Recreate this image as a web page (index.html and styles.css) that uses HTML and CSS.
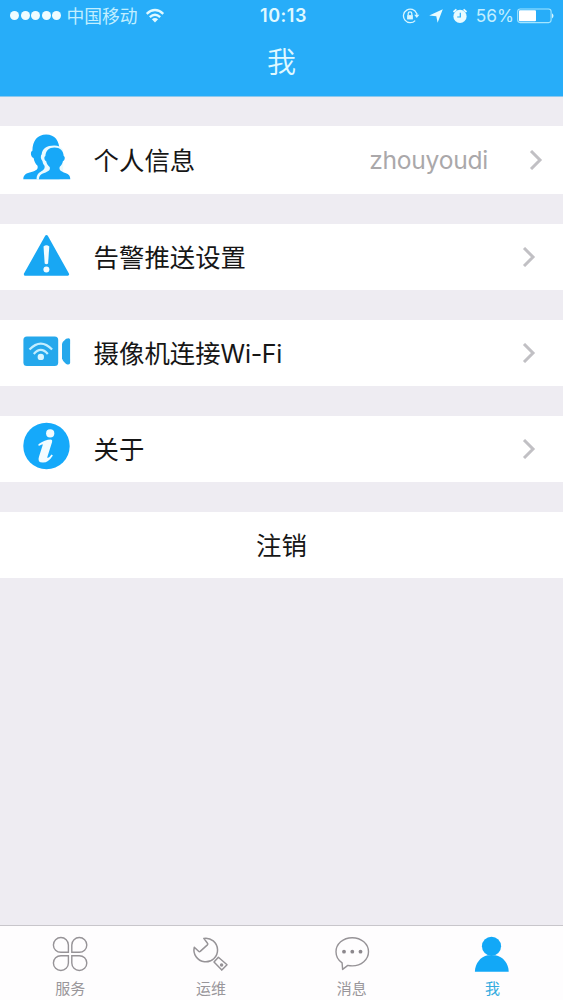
FILE: index.html
```html
<!DOCTYPE html>
<html lang="zh-CN">
<head>
<meta charset="utf-8">
<title>我</title>
<link rel="stylesheet" href="styles.css">
</head>
<body>
<div class="app">
  <header class="header">
    <div class="status">
      <div class="status-left">
        <div class="signal"><i></i><i></i><i></i><i></i><i></i></div>
        <span class="carrier">中国移动</span>
        <svg class="wifi" width="20" height="16" viewBox="0 0 20 16" fill="none" stroke="#e0f9ff" stroke-width="2.3"><path d="M1.7 5.8Q10-1.8 18.3 5.8M4.8 9.2Q10 4.2 15.2 9.2"/><path d="M6.9 11.2Q10 8.6 13.1 11.2L10 14.6Z" fill="#e0f9ff" stroke="none"/></svg>
      </div>
      <span class="time">10:13</span>
      <div class="status-right">
        <svg width="18" height="16" viewBox="0 0 18 16" fill="none" stroke="#d8f6ff" stroke-width="1.3"><path d="M14.5 5.2A6.8 6.8 0 1 0 13.2 12.6M14.8 5v3"/><path d="M12.2 6.8h5.2l-2.6 3.3z" fill="#d8f6ff" stroke="none"/><rect x="5.1" y="7.1" width="5.8" height="4.3" fill="#d8f6ff" stroke="none"/><path d="M6.2 7V5.6a1.8 1.8 0 0 1 3.6 0V7"/></svg>
        <svg width="14" height="14" viewBox="0 0 14 14"><path d="M13.8.2 8.6 13.8 7.3 7.3.2 6.4z" fill="#e8fbff"/></svg>
        <svg width="16" height="16" viewBox="0 0 16 16"><circle cx="8" cy="8.4" r="6.6" fill="#e8fbff"/><path d="M1.5 4 4.4 1.4M11.6 1.4l2.9 2.6" stroke="#e8fbff" stroke-width="1.8"/><path d="M8.3 4.8V9H5.2" fill="none" stroke="#27adf9" stroke-width="1.2"/></svg>
        <span class="percent">56%</span>
        <svg class="battery" width="38" height="16" viewBox="0 0 38 16"><rect x=".7" y="1" width="33.4" height="13.6" rx="2.5" fill="none" stroke="#a4e6ff" stroke-width="1.1"/><rect x="2" y="2.3" width="17" height="11" rx="1" fill="#fff"/><path d="M35 5.2q3 2.6 0 5.2z" fill="#d8f6ff"/></svg>
      </div>
    </div>
    <h1 class="title">我</h1>
  </header>

  <main class="list">
    <section class="row row-first">
      <svg class="icon" width="48" height="48" viewBox="0 0 48 48" fill="#17a8f8"><path d="M.3 46.2c.2-4.6 3-5.8 8.2-7.1 4.6-1.5 7-2.8 6-6.3-2.1-2.2-3.4-5-3.9-7.9-2.9-.6-3.6-6.5-1.2-7.2C9.5 7.6 14.5 1.4 23.2 1.4S36.4 7.6 36.6 17.7V46.2z"/><path d="M13.5 46.4c0-4 1.3-6 4.2-7.6 3-1.7 4.7-3.6 3.7-6.2-1.2-1.6-1.6-3-2-4.7-1.9-1.8-2-5.4-.7-6.7.5-5.4 5-8.7 12.5-8.7 4 0 7 1.3 9 4.4V46.4z" fill="#eafaff"/><path d="M15.9 46.2c.4-4.6 2.6-5.4 6.8-6.8 3.6-1.2 4.7-2.8 4-5.3-1.9-1.7-3-3.5-3.5-5.9-2-.6-2.5-4.4-.8-5.1.2-5.4 3.6-8.7 9.1-8.7s9 3.3 9.2 8.7c1.8.7 1.2 4.5-.8 5.1-.5 2.4-1.6 4.2-3.3 5.9-.7 2.5.7 4.1 4.2 5.3 4.2 1.4 6.4 2.2 6.5 6.8z"/></svg>
      <span class="label">个人信息</span>
      <span class="value">zhouyoudi</span>
      <svg class="chevron" width="14" height="20" viewBox="0 0 14 20"><path d="m2 1 9 9-9 9"/></svg>
    </section>
    <section class="row">
      <svg class="icon" width="48" height="48" viewBox="0 0 48 48"><path d="M23.5 5.6 44.6 43.2H2.3z" fill="#18a7f3" stroke="#18a7f3" stroke-width="3" stroke-linejoin="round"/><path d="M20.5 15.4q2.9-2.5 5.8 0l-1.2 17q-1.7 1.5-3.4 0z" fill="#f2fcff"/><circle cx="23.4" cy="38.4" r="3" fill="#f2fcff"/></svg>
      <span class="label">告警推送设置</span>
      <svg class="chevron" width="14" height="20" viewBox="0 0 14 20"><path d="m2 1 9 9-9 9"/></svg>
    </section>
    <section class="row">
      <svg class="icon icon-camera" width="48" height="48" viewBox="0 0 48 48"><rect x=".4" y="7.6" width="34.8" height="29.3" rx="3.5" fill="#25a8ec"/><path d="M39 15q.4-2.4 4.1-5.3 4-1.4 4 1v23q0 2.8-4 1.3Q39.4 32 39 29.5z" fill="#25a8ec"/><path d="M6.5 20.6q11.3-12 22.6 0M10.8 25q7-8.1 14 0" fill="none" stroke="#c3eeff" stroke-width="2.2"/><circle cx="17.8" cy="27.9" r="3.2" fill="#d8f5ff"/></svg>
      <span class="label">摄像机连接<span class="latin">Wi-Fi</span></span>
      <svg class="chevron" width="14" height="20" viewBox="0 0 14 20"><path d="m2 1 9 9-9 9"/></svg>
    </section>
    <section class="row">
      <svg class="icon icon-info" width="48" height="48" viewBox="0 -2 48 48"><circle cx="23.5" cy="22" r="23.2" fill="#15a9fa"/><circle cx="27.2" cy="9.4" r="4.1" fill="#f2fcff"/><path d="M15.4 20.2q6.4-4.5 12.6-4.6 1.7.3 1.1 2.3l-4.6 14.5q-.5 2 .6 1.4 1.8-.8 3.3-3.3l1.5.9q-4.4 6.9-9.8 7.2-6.1.2-4.2-5.7l3.8-11.8q.2-.9-.8-.7l-3.2 1.5z" fill="#f2fcff"/></svg>
      <span class="label">关于</span>
      <svg class="chevron" width="14" height="20" viewBox="0 0 14 20"><path d="m2 1 9 9-9 9"/></svg>
    </section>
    <section class="row row-logout"><span class="label">注销</span></section>
  </main>

  <nav class="tabs">
    <a class="tab">
      <svg width="40" height="40" viewBox="0 0 40 40" fill="none" stroke="#969397" stroke-width="1.4"><path d="M18.4 18.3V10.9a7.5 7.4 0 1 0-7.5 7.4zM21.8 18.3V10.9a7.5 7.4 0 1 1 7.5 7.4zM18.4 21.7V29.1a7.5 7.4 0 1 1-7.5-7.4zM21.8 21.7V29.1a7.5 7.4 0 1 0 7.5-7.4z"/></svg>
      <span>服务</span>
    </a>
    <a class="tab">
      <svg width="40" height="40" viewBox="0 0 40 40" fill="none" stroke="#969397" stroke-width="1.5" stroke-linejoin="round"><path d="M12.8 4.4A11.8 11.8 0 1 1 3.3 13.2L7.6 17.2q.8.8 1.6.2L16.4 10.9q.8-.8.1-1.6z"/><path d="m27.4 23.3 8.6 7.4-5.2 5.4-7.8-8z"/><circle cx="30.6" cy="31" r="1" fill="#969397"/></svg>
      <span>运维</span>
    </a>
    <a class="tab">
      <svg width="40" height="40" viewBox="0 0 40 40" fill="none" stroke="#969397" stroke-width="1.4" stroke-linejoin="round"><path d="M10.1 28.9C6.3 26.4 4 22.4 4 17.8 4 10 11 3.7 20.2 3.7S36.5 10 36.5 17.8 29.4 31.9 20.2 31.9q-2.3 0-4.4-.5l-5.2 4z"/><g fill="#8c888d" stroke="none"><circle cx="12" cy="17.7" r="1.9"/><circle cx="20.3" cy="17.7" r="1.9"/><circle cx="28.5" cy="17.7" r="1.9"/></g></svg>
      <span>消息</span>
    </a>
    <a class="tab tab-active">
      <svg width="40" height="40" viewBox="0 0 40 40" fill="#12a8f7"><circle cx="18.5" cy="12.3" r="9.6"/><path d="M1.9 37.8C1.9 29.6 7.7 22.4 14.6 21.2h7.8C30 22.4 35.7 29.6 35.7 37.8z"/></svg>
      <span>我</span>
    </a>
  </nav>
</div>
</body>
</html>
```
FILE: styles.css
```css
* { box-sizing: border-box; }

body {
  margin: 0;
  font-family: Inter, "Noto Sans CJK SC", sans-serif;
}

.app {
  width: 563px;
  height: 1000px;
  display: flex;
  flex-direction: column;
  background: #eeecf2;
  overflow: hidden;
}

.header {
  height: 97px;
  background: #27adf9;
  border-bottom: 1px solid #8dc9ee;
  color: #e0f9ff;
}

.status {
  display: grid;
  grid-template-columns: 1fr auto 1fr;
  align-items: center;
  height: 31px;
  padding: 0 8px 0 10px;
}

.status-left, .status-right { display: flex; align-items: center; }
.status-right { justify-content: flex-end; }
.signal { display: flex; gap: 1.6px; }
.signal i { width: 9px; height: 9px; border-radius: 50%; background: #f0fcff; }
.carrier { margin-left: 5px; padding-top: 2px; font-size: 17.8px; line-height: 28px; color: #c2efff; }
.wifi { margin-left: 7px; }
.time { padding-left: 2px; font-size: 18px; font-weight: 600; letter-spacing: .5px; }
.status-right svg + svg { margin-left: 9px; }
.percent { margin-left: 8px; font-size: 17.3px; color: #c2efff; }
.battery { margin-left: 3px; }

.title {
  margin: 0;
  padding-top: 2px;
  font-size: 29px;
  line-height: 60px;
  font-weight: 350;
  text-align: center;
}

.list { flex: 1; display: flex; flex-direction: column; gap: 30px; padding-top: 29px; }

.row {
  height: 66px;
  display: flex;
  align-items: center;
  padding: 0 27px 0 23px;
  background: #fff;
}
.row-first { height: 68px; padding-right: 20px; }
.icon { flex: none; margin-right: 22.6px; margin-top: -4px; }
.row-first .icon { margin-top: -6px; }
.icon-camera { margin-top: 0; }
.icon-info { margin-top: -6px; }
.label { padding-top: 2px; font-size: 25.4px; line-height: 38px; color: #161616; white-space: nowrap; }
.latin { font-size: 25px; letter-spacing: -.3px; }
.value { margin-left: auto; margin-right: 41px; font-size: 24.6px; letter-spacing: -.25px; color: #aaa8aa; }
.chevron { flex: none; margin-left: auto; fill: none; stroke: #c1c0c4; stroke-width: 3; }
.value + .chevron { margin-left: 0; }
.row-logout { justify-content: center; padding: 0; }

.tabs {
  height: 75px;
  display: grid;
  grid-template-columns: repeat(4, 1fr);
  background: #fefdfe;
  border-top: 1px solid #c8c6cb;
}
.tab {
  display: flex;
  flex-direction: column;
  align-items: center;
  padding-top: 8px;
  font-size: 15px;
  line-height: 22px;
  color: #99969a;
}
.tab span { margin-top: 4px; }
.tab-active { color: #32abdf; }
```
